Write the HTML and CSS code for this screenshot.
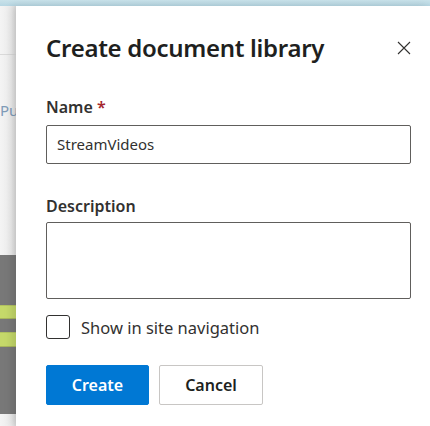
FILE: index.html
```html
<!DOCTYPE html>
<html>
<head>
<meta charset="utf-8">
<link rel="stylesheet" href="styles.css">
</head>
<body>
<div class="topbar"></div>
<div class="main">
  <div class="site">
    <div class="site-header"></div>
    <div class="site-crumb">Pu</div>
    <div class="site-hero">
      <div class="stripe s1"></div>
      <div class="stripe s2"></div>
    </div>
  </div>
  <div class="panel">
    <div class="panel-head">
      <h1 class="title">Create document library</h1>
      <button class="close" aria-label="Close">
        <svg width="14" height="14" viewBox="0 0 14 14"><path d="M1 1L13 13M13 1L1 13" stroke="#323130" stroke-width="1.1" fill="none"/></svg>
      </button>
    </div>
    <div class="field">
      <label class="label">Name <span class="req">*</span></label>
      <div class="input">StreamVideos</div>
    </div>
    <div class="field desc">
      <label class="label">Description</label>
      <div class="textarea"></div>
    </div>
    <div class="check">
      <span class="box"></span>
      <span class="check-text">Show in site navigation</span>
    </div>
    <div class="actions">
      <button class="btn primary">Create</button>
      <button class="btn">Cancel</button>
    </div>
  </div>
</div>
</body>
</html>
```
FILE: styles.css
```css
* { box-sizing: border-box; }
html, body { margin: 0; padding: 0; }
body {
  width: 430px;
  height: 426px;
  overflow: hidden;
  font-family: "Noto Sans", "Open Sans", sans-serif;
  color: #323130;
  background: #f3f3f3;
}
.topbar {
  height: 6px;
  background: linear-gradient(#c9e2ea, #b7d7e3);
}
.main {
  display: flex;
  height: 420px;
}
.site {
  width: 16px;
  flex: none;
  overflow: hidden;
  background: linear-gradient(90deg, #f4f4f4 0%, #ececec 70%, #dcdcdc 100%);
  display: flex;
  flex-direction: column;
}
.site-header {
  height: 49px;
  border-bottom: 1px solid #d9d9d9;
  flex: none;
}
.site-crumb {
  margin-top: 45px;
  font-size: 15px;
  line-height: 20px;
  color: #7f9bb8;
  white-space: nowrap;
  flex: none;
}
.site-hero {
  margin-top: 135px;
  height: 159px;
  flex: none;
  background: #787878;
  display: flex;
  flex-direction: column;
}
.stripe {
  height: 14px;
  background: #c5d96a;
  border-top: 1px solid #b1c260;
  border-bottom: 1px solid #a8b65c;
}
.s1 { margin-top: 50px; }
.s2 { margin-top: 13px; height: 15px; }
.panel {
  flex: 1;
  background: #fff;
  box-shadow: -4px 0 8px rgba(0,0,0,0.12);
  padding: 0 19px 0 30px;
  position: relative;
  z-index: 1;
}
.panel-head {
  display: flex;
  align-items: center;
  justify-content: space-between;
  height: 83px;
}
.title {
  margin: 0;
  font-size: 24px;
  font-weight: 600;
  line-height: 32px;
  color: #201f1e;
  letter-spacing: -0.3px;
}
.close {
  border: 0;
  background: none;
  padding: 0;
  width: 14px;
  height: 14px;
  display: flex;
}
.field { display: flex; flex-direction: column; }
.label {
  font-size: 16px;
  font-weight: 600;
  line-height: 20px;
  color: #323130;
  margin-top: 8px;
  margin-bottom: 8px;
}
.req { color: #a4262c; }
.input {
  height: 39px;
  border: 1px solid #605e5c;
  border-radius: 2px;
  padding: 0 10px;
  font-size: 15px;
  line-height: 37px;
  color: #323130;
}
.desc { margin-top: 24px; }
.desc .label { margin-bottom: 6px; }
.textarea {
  height: 77px;
  border: 1px solid #605e5c;
  border-radius: 2px;
}
.check {
  display: flex;
  align-items: center;
  margin-top: 16px;
  gap: 11px;
  height: 24px;
}
.box {
  width: 24px;
  height: 24px;
  border: 1px solid #323130;
  border-radius: 3px;
}
.check-text {
  font-size: 16.5px;
  line-height: 24px;
  color: #323130;
  padding-top: 2px;
}
.actions {
  display: flex;
  gap: 10px;
  margin-top: 26px;
}
.btn {
  width: 104px;
  height: 40px;
  border: 1px solid #c8c6c4;
  border-radius: 2px;
  background: #fff;
  font-family: inherit;
  font-size: 16px;
  font-weight: 600;
  color: #201f1e;
}
.btn.primary {
  width: 103px;
  background: #0078d4;
  border-color: #0078d4;
  color: #fff;
}
```
